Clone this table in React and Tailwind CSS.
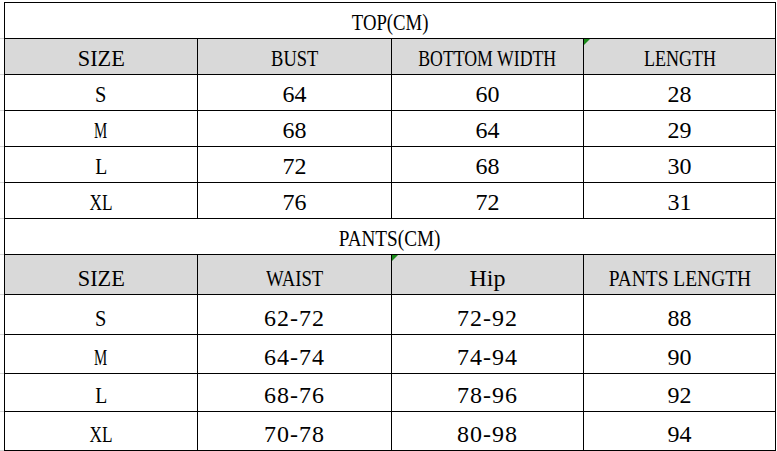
import React from 'react';

const widths = ['w-[193px]', 'w-[194px]', 'w-[192px]', 'w-[192px]'];

// the sheet uses a narrow half-width serif; squeeze Liberation Serif to the same widths
const squeeze = {
  'TOP(CM)': 'scale-x-[0.78]',
  'PANTS(CM)': 'scale-x-[0.8]',
  SIZE: 'scale-x-[0.93]',
  BUST: 'scale-x-[0.77]',
  'BOTTOM WIDTH': 'scale-x-[0.74]',
  LENGTH: 'scale-x-[0.75]',
  WAIST: 'scale-x-[0.78]',
  Hip: '',
  'PANTS LENGTH': 'scale-x-[0.81]',
  S: 'scale-x-[0.85]',
  M: 'scale-x-[0.62]',
  L: 'scale-x-[0.82]',
  XL: 'scale-x-[0.72]',
};

const topRows = [
  ['S', '64', '60', '28'],
  ['M', '68', '64', '29'],
  ['L', '72', '68', '30'],
  ['XL', '76', '72', '31'],
];

const pantsRows = [
  ['S', '62-72', '72-92', '88', 'h-[40px]'],
  ['M', '64-74', '74-94', '90', 'h-[39px]'],
  ['L', '68-76', '78-96', '92', 'h-[38px]'],
  ['XL', '70-78', '80-98', '94', 'h-[39px]'],
];

const Label = ({ children }) => {
  const extra = squeeze[children] ?? (children.includes('-') ? 'tracking-[1px]' : '');
  return (
    <span className={`inline-block whitespace-pre font-['Liberation_Serif',serif] text-[24px] leading-none text-black ${extra}`}>
      {children}
    </span>
  );
};

// green error marker in the top left corner of a cell
const Marker = () => (
  <div className="absolute left-0 top-0 h-0 w-0 border-t-[6px] border-r-[6px] border-t-[#1a8a1a] border-r-transparent" />
);

const Row = ({ height, cells, header, markAt }) => (
  <div className={`flex ${height}`}>
    <div className="w-[4px] shrink-0 border-b border-[#d4d4d4]" />
    <div className="flex border-l border-black">
      {cells.map((c, i) => (
        <div
          key={i}
          className={`relative flex items-end justify-center border-r border-b border-black pb-[4px] ${widths[i]} ${header ? 'bg-[#d9d9d9]' : 'bg-white'}`}
        >
          {markAt === i && <Marker />}
          <Label>{c}</Label>
        </div>
      ))}
    </div>
  </div>
);

const TitleRow = ({ text }) => (
  <div className="flex h-[36px]">
    <div className="w-[4px] shrink-0 border-b border-[#d4d4d4]" />
    <div className="flex w-[772px] items-end justify-center border-l border-r border-b border-black bg-white pb-[4px]">
      <Label>{text}</Label>
    </div>
  </div>
);

export default function App() {
  return (
    <div className="h-[451px] w-[777px] bg-white pt-[2px]">
      {/* top edge of the table */}
      <div className="ml-[4px] h-[1px] w-[772px] bg-black" />

      <TitleRow text="TOP(CM)" />
      <Row height="h-[36px]" header cells={['SIZE', 'BUST', 'BOTTOM WIDTH', 'LENGTH']} markAt={3} />
      {topRows.map((r) => (
        <Row key={r[0]} height="h-[36px]" cells={r} />
      ))}

      <TitleRow text="PANTS(CM)" />
      <Row height="h-[40px]" header cells={['SIZE', 'WAIST', 'Hip', 'PANTS LENGTH']} markAt={2} />
      {pantsRows.map((r) => (
        <Row key={r[0]} height={r[4]} cells={r.slice(0, 4)} />
      ))}
    </div>
  );
}
